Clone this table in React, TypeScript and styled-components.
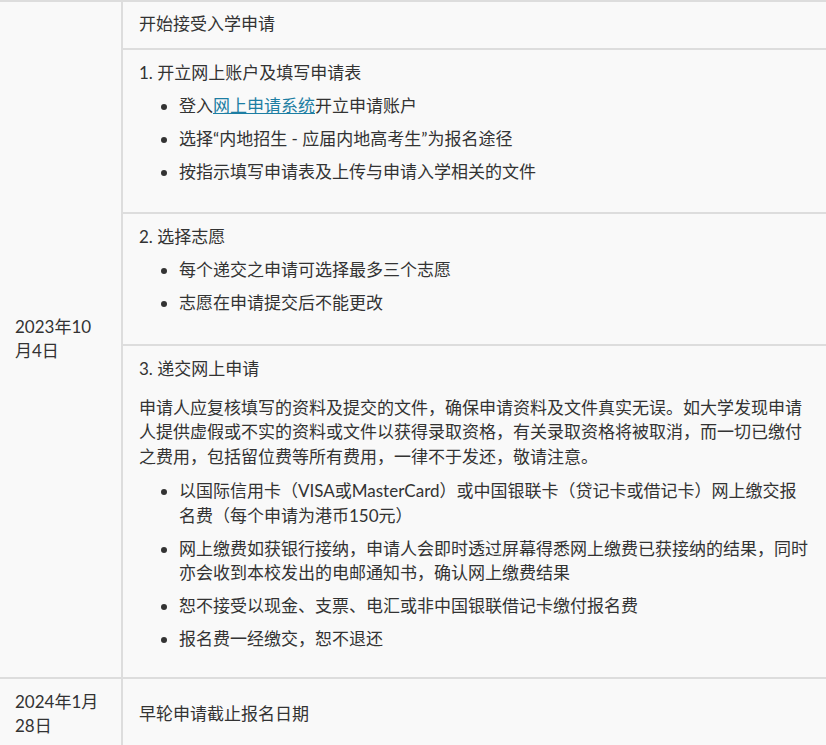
import React from "react";
import styled, { createGlobalStyle } from "styled-components";

const GlobalStyle = createGlobalStyle`
  html, body {
    margin: 0;
    padding: 0;
    background: #f9f9f9;
  }
  body {
    font-family: Lato, "Noto Sans CJK SC", "Noto Sans", sans-serif;
    font-size: 17px;
    line-height: 24.5px;
    color: #333333;
  }
  * { box-sizing: border-box; }
`;

const Schedule = styled.div`
  width: 100%;
  border-top: 2px solid #dddddd;
`;

const Group = styled.div`
  display: grid;
  grid-template-columns: 123px 1fr;
  border-bottom: 2px solid #dddddd;
`;

const DateCell = styled.div`
  display: flex;
  align-items: center;
  padding: 11px 15px;
  border-right: 2px solid #dddddd;
`;

const Steps = styled.div`
  display: flex;
  flex-direction: column;
`;

type CellVariant = "plain" | "step" | "last" | "single";

const paddings: Record<CellVariant, string> = {
  plain: "10px 15px 11px 16px",
  step: "11px 15px 14px 16px",
  last: "11px 15px 11px 16px",
  single: "11px 15px 11px 16px",
};

const StepCell = styled.div<{ $variant: CellVariant }>`
  padding: ${(p) => paddings[p.$variant]};
  border-bottom: ${(p) =>
    p.$variant === "last" || p.$variant === "single" ? "none" : "2px solid #dddddd"};
  display: ${(p) => (p.$variant === "single" ? "flex" : "block")};
  flex: ${(p) => (p.$variant === "single" ? "1" : "none")};
  align-items: center;
`;

const Heading = styled.p`
  margin: 0 0 8.5px;
`;

const Para = styled.p`
  margin: 14.5px 0 10px;
`;

const List = styled.ul`
  margin: 0;
  padding: 0 0 5.5px 40px;
`;

const Item = styled.li`
  margin-bottom: 8.5px;
`;

const Link = styled.a`
  color: #1d7ea3;
  text-decoration: underline;
`;

export default function App() {
  return (
    <>
      <GlobalStyle />
      <Schedule>
        <Group>
          <DateCell>2023年10月4日</DateCell>
          <Steps>
            <StepCell $variant="plain">开始接受入学申请</StepCell>
            <StepCell $variant="step">
              <Heading>1. 开立网上账户及填写申请表</Heading>
              <List>
                <Item>
                  登入<Link href="#">网上申请系统</Link>开立申请账户
                </Item>
                <Item>选择“内地招生 - 应届内地高考生”为报名途径</Item>
                <Item>按指示填写申请表及上传与申请入学相关的文件</Item>
              </List>
            </StepCell>
            <StepCell $variant="step">
              <Heading>2. 选择志愿</Heading>
              <List>
                <Item>每个递交之申请可选择最多三个志愿</Item>
                <Item>志愿在申请提交后不能更改</Item>
              </List>
            </StepCell>
            <StepCell $variant="last">
              <Heading>3. 递交网上申请</Heading>
              <Para>
                申请人应复核填写的资料及提交的文件，确保申请资料及文件真实无误。如大学发现申请人提供虚假或不实的资料或文件以获得录取资格，有关录取资格将被取消，而一切已缴付之费用，包括留位费等所有费用，一律不于发还，敬请注意。
              </Para>
              <List>
                <Item>
                  以国际信用卡（VISA或MasterCard）或中国银联卡（贷记卡或借记卡）网上缴交报名费（每个申请为港币150元）
                </Item>
                <Item>
                  网上缴费如获银行接纳，申请人会即时透过屏幕得悉网上缴费已获接纳的结果，同时亦会收到本校发出的电邮通知书，确认网上缴费结果
                </Item>
                <Item>恕不接受以现金、支票、电汇或非中国银联借记卡缴付报名费</Item>
                <Item>报名费一经缴交，恕不退还</Item>
              </List>
            </StepCell>
          </Steps>
        </Group>
        <Group>
          <DateCell>2024年1月28日</DateCell>
          <Steps>
            <StepCell $variant="single">早轮申请截止报名日期</StepCell>
          </Steps>
        </Group>
      </Schedule>
    </>
  );
}
